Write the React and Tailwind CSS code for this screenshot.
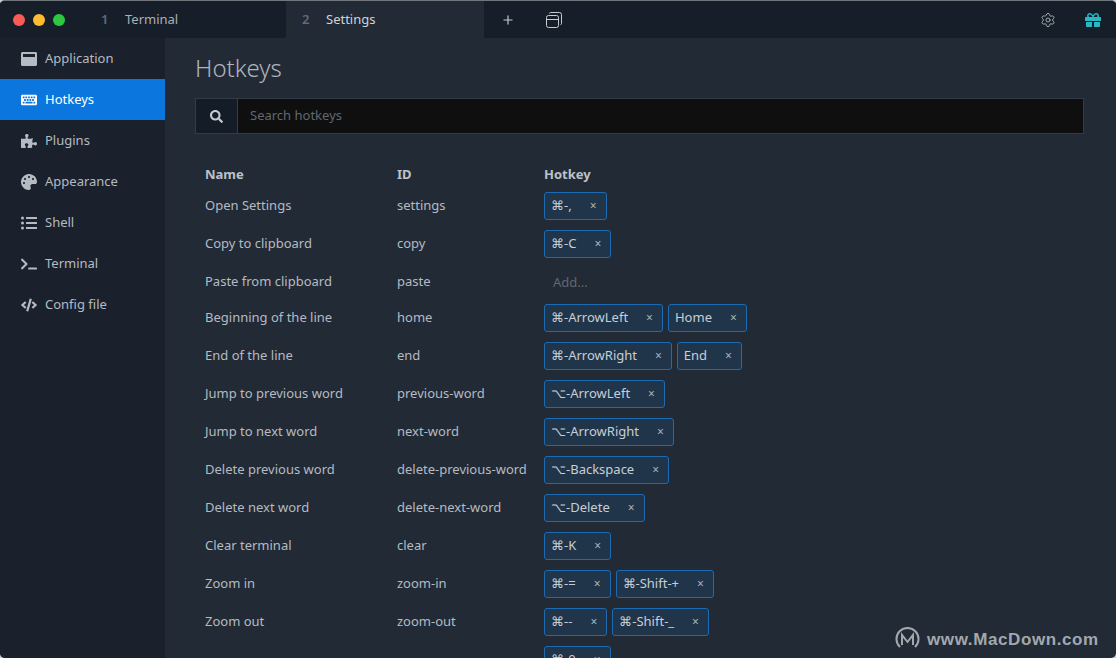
import React from 'react';
import { FaWindowMaximize, FaKeyboard, FaPuzzlePiece, FaPalette, FaListUl, FaTerminal, FaCode, FaSearch, FaGift } from 'react-icons/fa';
import { Settings, Plus } from 'lucide-react';

const menu = [
    { label: 'Application', icon: FaWindowMaximize },
    { label: 'Hotkeys', icon: FaKeyboard, active: true },
    { label: 'Plugins', icon: FaPuzzlePiece },
    { label: 'Appearance', icon: FaPalette },
    { label: 'Shell', icon: FaListUl },
    { label: 'Terminal', icon: FaTerminal },
    { label: 'Config file', icon: FaCode },
];

const rows = [
    { name: 'Open Settings', id: 'settings', keys: ['⌘-,'] },
    { name: 'Copy to clipboard', id: 'copy', keys: ['⌘-C'] },
    { name: 'Paste from clipboard', id: 'paste', keys: [] },
    { name: 'Beginning of the line', id: 'home', keys: ['⌘-ArrowLeft', 'Home'] },
    { name: 'End of the line', id: 'end', keys: ['⌘-ArrowRight', 'End'] },
    { name: 'Jump to previous word', id: 'previous-word', keys: ['⌥-ArrowLeft'] },
    { name: 'Jump to next word', id: 'next-word', keys: ['⌥-ArrowRight'] },
    { name: 'Delete previous word', id: 'delete-previous-word', keys: ['⌥-Backspace'] },
    { name: 'Delete next word', id: 'delete-next-word', keys: ['⌥-Delete'] },
    { name: 'Clear terminal', id: 'clear', keys: ['⌘-K'] },
    { name: 'Zoom in', id: 'zoom-in', keys: ['⌘-=', '⌘-Shift-+'] },
    { name: 'Zoom out', id: 'zoom-out', keys: ['⌘--', '⌘-Shift-_'] },
    { name: '', id: '', keys: ['⌘-0'] },
];

const Chip = ({ text }) => (
    <div className="h-[28px] flex items-center pl-[6px] pr-[9px] bg-[#20354a] border border-[#1b6bb5] rounded-[3px] text-[#c8ced4]">
        <span className="mr-[18px] whitespace-nowrap">{text}</span>
        <span className="text-[12px] text-[#aab2ba]">×</span>
    </div>
);

const Row = ({ row }) => (
    <div className="flex items-start">
        <div className="w-[192px] pt-[4px] text-[#b4bbc3]">{row.name}</div>
        <div className="w-[147px] pt-[4px] text-[#b4bbc3]">{row.id}</div>
        {row.keys.length > 0 ? (
            <div className="flex gap-[5px] h-[38px]">
                {row.keys.map((k) => <Chip key={k} text={k} />)}
            </div>
        ) : (
            <div className="h-[36px] pl-[9px] pt-[5px] text-[#5f6873]">Add...</div>
        )}
    </div>
);

export default function App() {
    return (
        <div className="h-[658px] w-[1116px] overflow-hidden bg-[#c9ccd0] font-['Noto_Sans',sans-serif] text-[13px]">
            <div className="h-full flex flex-col bg-[#222a35] rounded-[5px] border-t border-[#71767c] overflow-hidden">
                <header className="h-[37px] flex shrink-0 bg-[#222a35]">
                    <div className="w-[286px] flex items-center bg-[#161e29] rounded-br-[2px]">
                        <div className="flex gap-[8px] pl-[13px]">
                            <span className="w-[12px] h-[12px] rounded-full bg-[#fb5b55]"></span>
                            <span className="w-[12px] h-[12px] rounded-full bg-[#fcbc2e]"></span>
                            <span className="w-[12px] h-[12px] rounded-full bg-[#2bc840]"></span>
                        </div>
                        <span className="ml-[36px] w-[24px] font-semibold text-[#626b75]">1</span>
                        <span className="text-[#a9b0b8]">Terminal</span>
                    </div>
                    <div className="w-[198px] flex items-center pl-[16px]">
                        <span className="w-[24px] font-semibold text-[#626b75]">2</span>
                        <span className="text-[#cfd4d9]">Settings</span>
                    </div>
                    <div className="flex-1 flex items-center bg-[#161e29] text-[#c6cbd1]">
                        <Plus className="ml-[17px] w-[14px] h-[14px]" strokeWidth={2} />
                        <svg className="ml-[31px]" width="16" height="16" viewBox="0 0 16 16" fill="none" stroke="currentColor" strokeWidth="1">
                            <rect x="0.5" y="3.5" width="12" height="12" rx="2" />
                            <path d="M0.5 7.5h12" />
                            <path d="M3.5 1.5a1 1 0 0 1 1-1h9a2 2 0 0 1 2 2v9a1 1 0 0 1-1 1" />
                        </svg>
                        <Settings className="ml-auto w-[16px] h-[16px] text-[#aab1b8]" strokeWidth={1.4} />
                        <FaGift className="ml-[29px] mr-[15px] w-[16px] h-[16px] text-[#26b8c4]" />
                    </div>
                </header>
                <div className="flex flex-1 min-h-0">
                    <aside className="w-[165px] shrink-0 bg-[#1a212c]">
                        {menu.map(({ label, icon: Icon, active }) => (
                            <div key={label} className={active ? 'h-[41px] flex items-center pl-[21px] bg-[#0b76dd] text-white' : 'h-[41px] flex items-center pl-[21px] text-[#b4bbc3]'}>
                                <Icon className="w-[16px] h-[16px] mr-[8px]" />
                                {label}
                            </div>
                        ))}
                    </aside>
                    <main className="flex-1 min-w-0 pl-[30px] pr-[32px]">
                        <h1 className="mt-[15px] h-[30px] text-[24px] leading-[30px] font-light text-[#aeb5bc] font-['Noto_Sans',sans-serif]">Hotkeys</h1>
                        <div className="mt-[15px] h-[36px] flex border border-[#323b47]">
                            <div className="w-[42px] flex items-center justify-center bg-[#141c27] border-r border-[#323b47] text-[#c6cbd1]">
                                <FaSearch className="w-[13px] h-[13px]" />
                            </div>
                            <div className="flex-1 flex items-center pl-[12px] bg-[#0f0f10] text-[#5f6873]">Search hotkeys</div>
                        </div>
                        <div className="mt-[31px] pl-[10px]">
                            <div className="flex h-[27px] font-bold text-[#bcc2c9]">
                                <div className="w-[192px]">Name</div>
                                <div className="w-[147px]">ID</div>
                                <div>Hotkey</div>
                            </div>
                            {rows.map((r, i) => <Row key={i} row={r} />)}
                        </div>
                    </main>
                </div>
            </div>
            <div className="absolute left-[895px] top-[627px] flex items-center gap-[7px] text-[#a3a8ae]">
                <svg width="25" height="25" viewBox="0 0 25 25" fill="none" stroke="currentColor" strokeWidth="2">
                    <path d="M5 20A11 11 0 1 1 20 20" />
                    <path d="M7 18V8l5.5 7L18 8v10" />
                </svg>
                <span className="font-['Liberation_Sans',sans-serif] font-bold text-[17px] tracking-[0.6px]">www.MacDown.com</span>
            </div>
        </div>
    );
}
